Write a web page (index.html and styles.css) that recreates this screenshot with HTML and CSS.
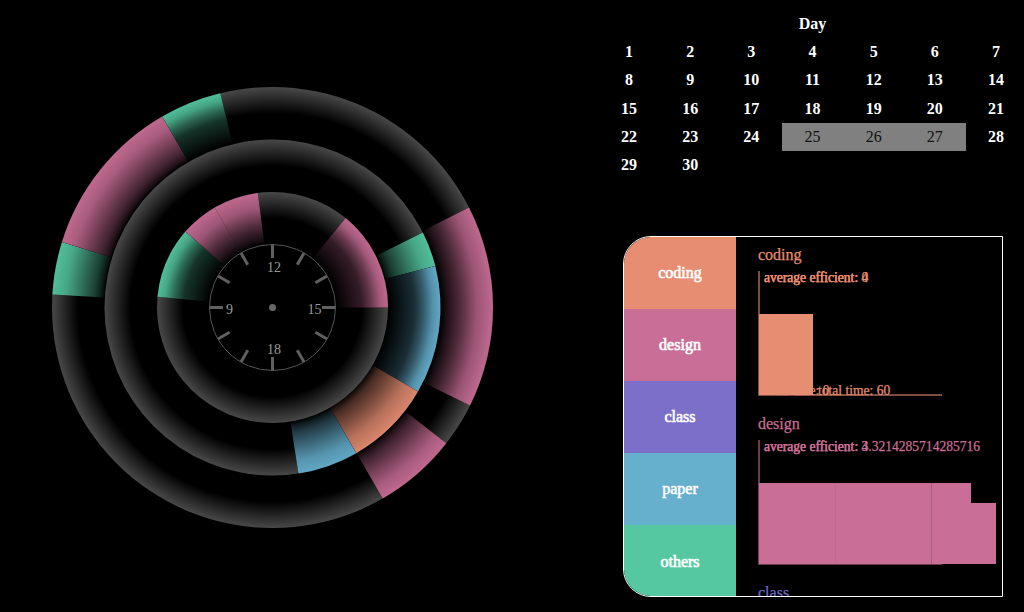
FILE: index.html
```
<!DOCTYPE html>
<html lang="en">
<head>
<meta charset="utf-8">
<title>Day tracker</title>
<link rel="stylesheet" href="styles.css">
</head>
<body>
<main class="page">
  <svg class="clock" width="600" height="612" viewBox="0 0 600 612" id="clock">
    <defs id="defs"></defs>
    <g id="rings"></g>
    <g class="face">
      <circle class="dial" cx="272.5" cy="307.5" r="63"/>
      <circle class="hub" cx="272.5" cy="307.5" r="3.5"/>
      <g id="ticks"></g>
      <text x="267" y="272">12</text>
      <text x="307.5" y="314">15</text>
      <text x="267" y="354">18</text>
      <text x="226" y="314">9</text>
    </g>
  </svg>
  <aside class="side">
    <table class="calendar">
      <tr><th colspan="7">Day</th></tr>
      <tr><th>1</th><th>2</th><th>3</th><th>4</th><th>5</th><th>6</th><th>7</th></tr>
      <tr><th>8</th><th>9</th><th>10</th><th>11</th><th>12</th><th>13</th><th>14</th></tr>
      <tr><th>15</th><th>16</th><th>17</th><th>18</th><th>19</th><th>20</th><th>21</th></tr>
      <tr><th>22</th><th>23</th><th>24</th><td>25</td><td>26</td><td>27</td><th>28</th></tr>
      <tr><th>29</th><th>30</th></tr>
    </table>
    <section class="panel">
      <nav class="tabs">
        <div class="tab coding">coding</div>
        <div class="tab design">design</div>
        <div class="tab class">class</div>
        <div class="tab paper">paper</div>
        <div class="tab others">others</div>
      </nav>
      <div class="charts">
        <svg class="chart chart-coding" width="266" height="169" viewBox="0 0 266 169">
          <text class="title" x="22" y="23">coding</text>
          <text x="28" y="45">average efficient: 0</text>
          <text x="28" y="45">average efficient: 4</text>
          <text x="28" y="158">total time: 0</text>
          <text x="82" y="158">total time: 60</text>
          <path class="axis" d="M23 34V158H206"/>
          <rect x="23" y="77" width="54" height="81"/>
        </svg>
        <svg class="chart chart-design" width="266" height="169" viewBox="0 0 266 169">
          <text class="title" x="22" y="23">design</text>
          <text x="28" y="45">average efficient: 3</text>
          <text x="28" y="45">average efficient: 4.3214285714285716</text>
          <path class="axis" d="M23 34V158H206"/>
          <rect x="23" y="77" width="212" height="81"/>
          <rect x="195" y="97" width="65" height="61"/>
          <path class="seam" d="M99.5 77V158"/>
          <path class="seam strong" d="M195.5 77V158"/>
        </svg>
        <svg class="chart chart-class" width="266" height="169" viewBox="0 0 266 169">
          <text class="title" x="22" y="22.5">class</text>
        </svg>
      </div>
    </section>
  </aside>
</main>
<script src="clock.js"></script>
</body>
</html>
```
FILE: styles.css
```
body { margin: 0; background: #000; font-family: "Liberation Serif", "Times New Roman", serif; font-size: 16px; }
.page { display: flex; width: 1024px; height: 612px; overflow: hidden; }
.clock { flex: none; display: block; }
.dial { fill: none; stroke: #555; stroke-width: 1; }
.hub { fill: #666; }
.tick { stroke: #606060; stroke-width: 3; }
.face text { fill: #999; font-size: 14px; }
.side { width: 424px; display: flex; flex-direction: column; }
.calendar { width: 428px; height: 169px; margin: 10px 0 0 -1px; border-collapse: collapse; table-layout: fixed; color: #fff; flex: none; }
.calendar th, .calendar td { padding: 0 1px 0 0; text-align: center; line-height: 18px; }
.calendar td { background: gray; color: #111; }
.panel { box-sizing: border-box; width: 380px; height: 361px; margin: 57px 0 0 23px; border: 1px solid #fff; border-radius: 28px 0 0 28px; overflow: hidden; display: flex; flex: none; }
.tabs { width: 112px; flex: none; display: flex; flex-direction: column; }
.tab { height: 72.1px; flex: none; display: flex; align-items: center; justify-content: center; color: #fff; -webkit-text-stroke: .6px #fff; }
.tab:last-child { height: 73px; }
.coding { background: #e68d72; }
.design { background: #c96e96; }
.class { background: #7c6fc9; }
.paper { background: #66b0ce; }
.others { background: #55c8a2; }
.charts { width: 266px; height: 359px; overflow: hidden; }
.chart { display: block; }
.chart text { font-size: 13.55px; stroke-width: .25px; }
.chart .title { font-size: 16px; }
.chart-coding { fill: #e68d72; }
.chart-coding text { stroke: #e68d72; }
.chart-design { fill: #c96e96; }
.chart-design text { stroke: #c96e96; }
.chart-class { fill: #7068c8; }
.chart-class text { stroke: #7068c8; }
.axis { fill: none; stroke-width: 2; opacity: .55; }
.chart-coding .axis { stroke: #e68d72; }
.chart-design .axis { stroke: #c96e96; }
.seam { stroke: #be6a8e; stroke-width: 1; }
.strong { stroke: #aa5d80; }
```
FILE: clock.js
```
const NS = 'http://www.w3.org/2000/svg';
const CX = 272.5, CY = 307.5, BAND = 52.5;
const BASE = '#484848';
const PINK = '#c96e96', GREEN = '#55c8a2', BLUE = '#66b0ce', ORANGE = '#e68d72';

// [depth, opacity] stops from the rim inwards, by efficiency
const LOW = [[0, .95], [.15, .82], [.33, .5], [.5, .26], [.75, .13], [1, 0]];
const MID = [[0, .95], [.3, .78], [.62, .4], [.88, .14], [1, 0]];
const HIGH = [[0, .95], [.25, .84], [.5, .61], [.8, .32], [.93, .14], [1, 0]];
const TOP = [[0, .95], [.3, .8], [.6, .53], [.85, .31], [1, .05]];

// start, end (degrees from 12 o'clock), colour, stops
const rings = [
  { r: 220.5, parts: [
    [-86.6, -72.7, GREEN, HIGH],
    [-72.7, -30, PINK, HIGH],
    [-30, -13.7, GREEN, LOW],
    [63, 116.4, PINK, MID],
    [128, 150, PINK, HIGH]] },
  { r: 168, parts: [
    [63.5, 75.7, GREEN, HIGH],
    [75.7, 120, BLUE, LOW],
    [120, 150.1, ORANGE, TOP],
    [150.1, 171.1, BLUE, HIGH]] },
  { r: 115.5, parts: [
    [-84.7, -48.9, GREEN, LOW],
    [-48.9, -29.7, PINK, MID],
    [-30, -7.3, PINK, MID],
    [39.3, 90, PINK, LOW]] }
];

function add(parent, name, attrs) {
  const node = document.createElementNS(NS, name);
  for (const key in attrs) node.setAttribute(key, attrs[key]);
  return parent.appendChild(node);
}
const defs = document.getElementById('defs');
const group = document.getElementById('rings');
let count = 0;

function gradient(r, color, stops) {
  const id = 'g' + count++;
  const g = add(defs, 'radialGradient', { id, gradientUnits: 'userSpaceOnUse', cx: CX, cy: CY, r });
  [...stops].reverse().forEach(([depth, alpha]) =>
    add(g, 'stop', { offset: 1 - depth * BAND / r, 'stop-color': color, 'stop-opacity': alpha }));
  return 'url(#' + id + ')';
}
function point(r, deg) {
  const a = deg * Math.PI / 180;
  return (CX + r * Math.sin(a)).toFixed(2) + ' ' + (CY - r * Math.cos(a)).toFixed(2);
}
for (const ring of rings) {
  const { r } = ring, inner = r - BAND;
  add(group, 'circle', { cx: CX, cy: CY, r, fill: '#000' });
  add(group, 'circle', { cx: CX, cy: CY, r, fill: gradient(r, BASE, [[0, 1], [.5, 0]]) });
  for (const [a, b, color, stops] of ring.parts) {
    const d = `M${point(r, a)}A${r} ${r} 0 0 1 ${point(r, b)}L${point(inner, b)}A${inner} ${inner} 0 0 0 ${point(inner, a)}Z`;
    add(group, 'path', { d, fill: '#000' });
    add(group, 'path', { d, fill: gradient(r, color, stops) });
  }
}
add(group, 'circle', { cx: CX, cy: CY, r: 63, fill: '#000' });
const ticks = document.getElementById('ticks');
for (let i = 0; i < 12; i++)
  add(ticks, 'path', { class: 'tick', d: `M${point(63, i * 30)}L${point(49.5, i * 30)}` });
```
